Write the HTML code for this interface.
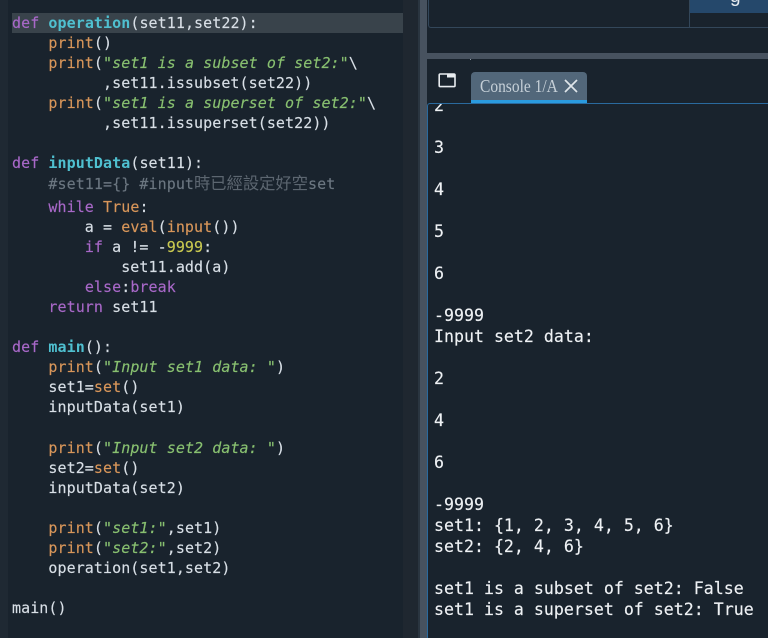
<!DOCTYPE html>
<html><head><meta charset="utf-8"><style>
html,body{margin:0;padding:0;background:#19232d;width:768px;height:638px;overflow:hidden}
.l,.c{position:absolute;white-space:pre;font-family:"DejaVu Sans Mono","Noto Sans CJK TC",monospace;color:#d8dfe6;-webkit-text-stroke:.15px}
.l{left:12px;font-size:15px;letter-spacing:.07px;line-height:20px;height:20px}
.c{left:434px;font-size:16.6px;line-height:21px;height:21px;color:#eef1f4}
.k{color:#a868c8}.f{color:#4fc0d0;font-weight:bold;-webkit-text-stroke:0}.b{color:#d8965a}.s{color:#88c070;font-style:italic}.y{color:#c8c850}
.z{font-size:16.3px;letter-spacing:0;color:#5c6670;-webkit-text-stroke:0}
.r{position:absolute}
</style></head><body>
<div class="r" style="left:0;top:0;width:8px;height:638px;background:#1f2933"></div>
<div class="r" style="left:403px;top:0;width:15px;height:638px;background:#1f2730"></div>
<div class="r" style="left:12px;top:13px;width:391px;height:20px;background:#39434b"></div>
<div class="r" style="left:418px;top:0;width:2px;height:638px;background:#2a3540"></div>
<div class="r" style="left:420px;top:0;width:7px;height:638px;background:#47525f"></div>
<div class="r" style="left:428px;top:-3px;width:340px;height:31px;box-sizing:border-box;border-left:1px solid #33475a;border-bottom:1px solid #33475a;border-radius:0 0 0 3px"></div>
<div class="r" style="left:689px;top:0;width:1px;height:27px;background:#33475a"></div>
<div class="r" style="left:690px;top:0;width:78px;height:13px;background:#25486b;overflow:hidden"><span class="r" style="left:40px;top:-14px;font:19px/22px 'Liberation Sans',sans-serif;color:#e8ecf0">g</span></div>
<div class="r" style="left:427px;top:53px;width:341px;height:6px;background:#47525f"></div>
<div class="r" style="left:470px;top:59px;width:1px;height:1px;background:#8a96a0"></div>
<div class="r" style="left:471px;top:72px;width:116px;height:28px;background:#52677a;border-radius:4px 4px 0 0"></div>
<div class="r" style="left:471px;top:100px;width:116px;height:3px;background:#2a9bdf"></div>
<div class="r" style="left:480px;top:74px;font:18px/24px 'Liberation Serif',serif;color:#c6d0d8;white-space:pre;transform:scaleX(.86);transform-origin:0 0">Console 1/A</div>
<svg class="r" style="left:563px;top:78px" width="16" height="16" viewBox="0 0 16 16"><path d="M2 2L14 14M14 2L2 14" stroke="#dfe5ea" stroke-width="1.7" fill="none"/></svg>
<svg class="r" style="left:438px;top:71px" width="20" height="18" viewBox="0 0 20 18"><rect x="1.2" y="3" width="15.8" height="12.6" rx="1" stroke="#e8ecf0" stroke-width="1.6" fill="none"/><rect x="9" y="3" width="8" height="3.5" fill="#e8ecf0"/></svg>
<div class="r" style="left:427px;top:103px;width:341px;height:535px;border-top:1px solid #2a6a9e;border-left:1px solid #2a6a9e;border-radius:3px 0 0 0;box-sizing:border-box"></div>

<div class="l" style="top:13px"><span class="k">def</span> <span class="f">operation</span>(set11,set22):</div>
<div class="l" style="top:33px">    <span class="b">print</span>()</div>
<div class="l" style="top:53px">    <span class="b">print</span>(<span class="s">"set1 is a subset of set2:"</span>\</div>
<div class="l" style="top:73px">          ,set11.issubset(set22))</div>
<div class="l" style="top:93px">    <span class="b">print</span>(<span class="s">"set1 is a superset of set2:"</span>\</div>
<div class="l" style="top:113px">          ,set11.issuperset(set22))</div>
<div class="l" style="top:153px"><span class="k">def</span> <span class="f">inputData</span>(set11):</div>
<div class="l" style="top:174px;color:#6b7680">    #set11={} #input<span class="z">時已經設定好空</span>set</div>
<div class="l" style="top:197px">    <span class="k">while</span> <span class="b">True</span>:</div>
<div class="l" style="top:217px">        a = <span class="b">eval</span>(<span class="b">input</span>())</div>
<div class="l" style="top:237px">        <span class="k">if</span> a != -<span class="y">9999</span>:</div>
<div class="l" style="top:257px">            set11.add(a)</div>
<div class="l" style="top:277px">        <span class="k">else</span>:<span class="k">break</span></div>
<div class="l" style="top:297px">    <span class="k">return</span> set11</div>
<div class="l" style="top:337px"><span class="k">def</span> <span class="f">main</span>():</div>
<div class="l" style="top:357px">    <span class="b">print</span>(<span class="s">"Input set1 data: "</span>)</div>
<div class="l" style="top:377px">    set1=<span class="b">set</span>()</div>
<div class="l" style="top:397px">    inputData(set1)</div>
<div class="l" style="top:438px">    <span class="b">print</span>(<span class="s">"Input set2 data: "</span>)</div>
<div class="l" style="top:458px">    set2=<span class="b">set</span>()</div>
<div class="l" style="top:478px">    inputData(set2)</div>
<div class="l" style="top:518px">    <span class="b">print</span>(<span class="s">"set1:"</span>,set1)</div>
<div class="l" style="top:538px">    <span class="b">print</span>(<span class="s">"set2:"</span>,set2)</div>
<div class="l" style="top:558px">    operation(set1,set2)</div>
<div class="l" style="top:598px">main()</div>

<div class="r" style="left:428px;top:104px;width:340px;height:534px;overflow:hidden">
<div class="c" style="left:6px;top:-9px">2</div>
<div class="c" style="left:6px;top:33px">3</div>
<div class="c" style="left:6px;top:75px">4</div>
<div class="c" style="left:6px;top:117px">5</div>
<div class="c" style="left:6px;top:159px">6</div>
<div class="c" style="left:6px;top:201px">-9999</div>
<div class="c" style="left:6px;top:222px">Input set2 data:</div>
<div class="c" style="left:6px;top:264px">2</div>
<div class="c" style="left:6px;top:306px">4</div>
<div class="c" style="left:6px;top:348px">6</div>
<div class="c" style="left:6px;top:390px">-9999</div>
<div class="c" style="left:6px;top:411px">set1: {1, 2, 3, 4, 5, 6}</div>
<div class="c" style="left:6px;top:432px">set2: {2, 4, 6}</div>
<div class="c" style="left:6px;top:474px">set1 is a subset of set2: False</div>
<div class="c" style="left:6px;top:495px">set1 is a superset of set2: True</div>
</div>
</body></html>
